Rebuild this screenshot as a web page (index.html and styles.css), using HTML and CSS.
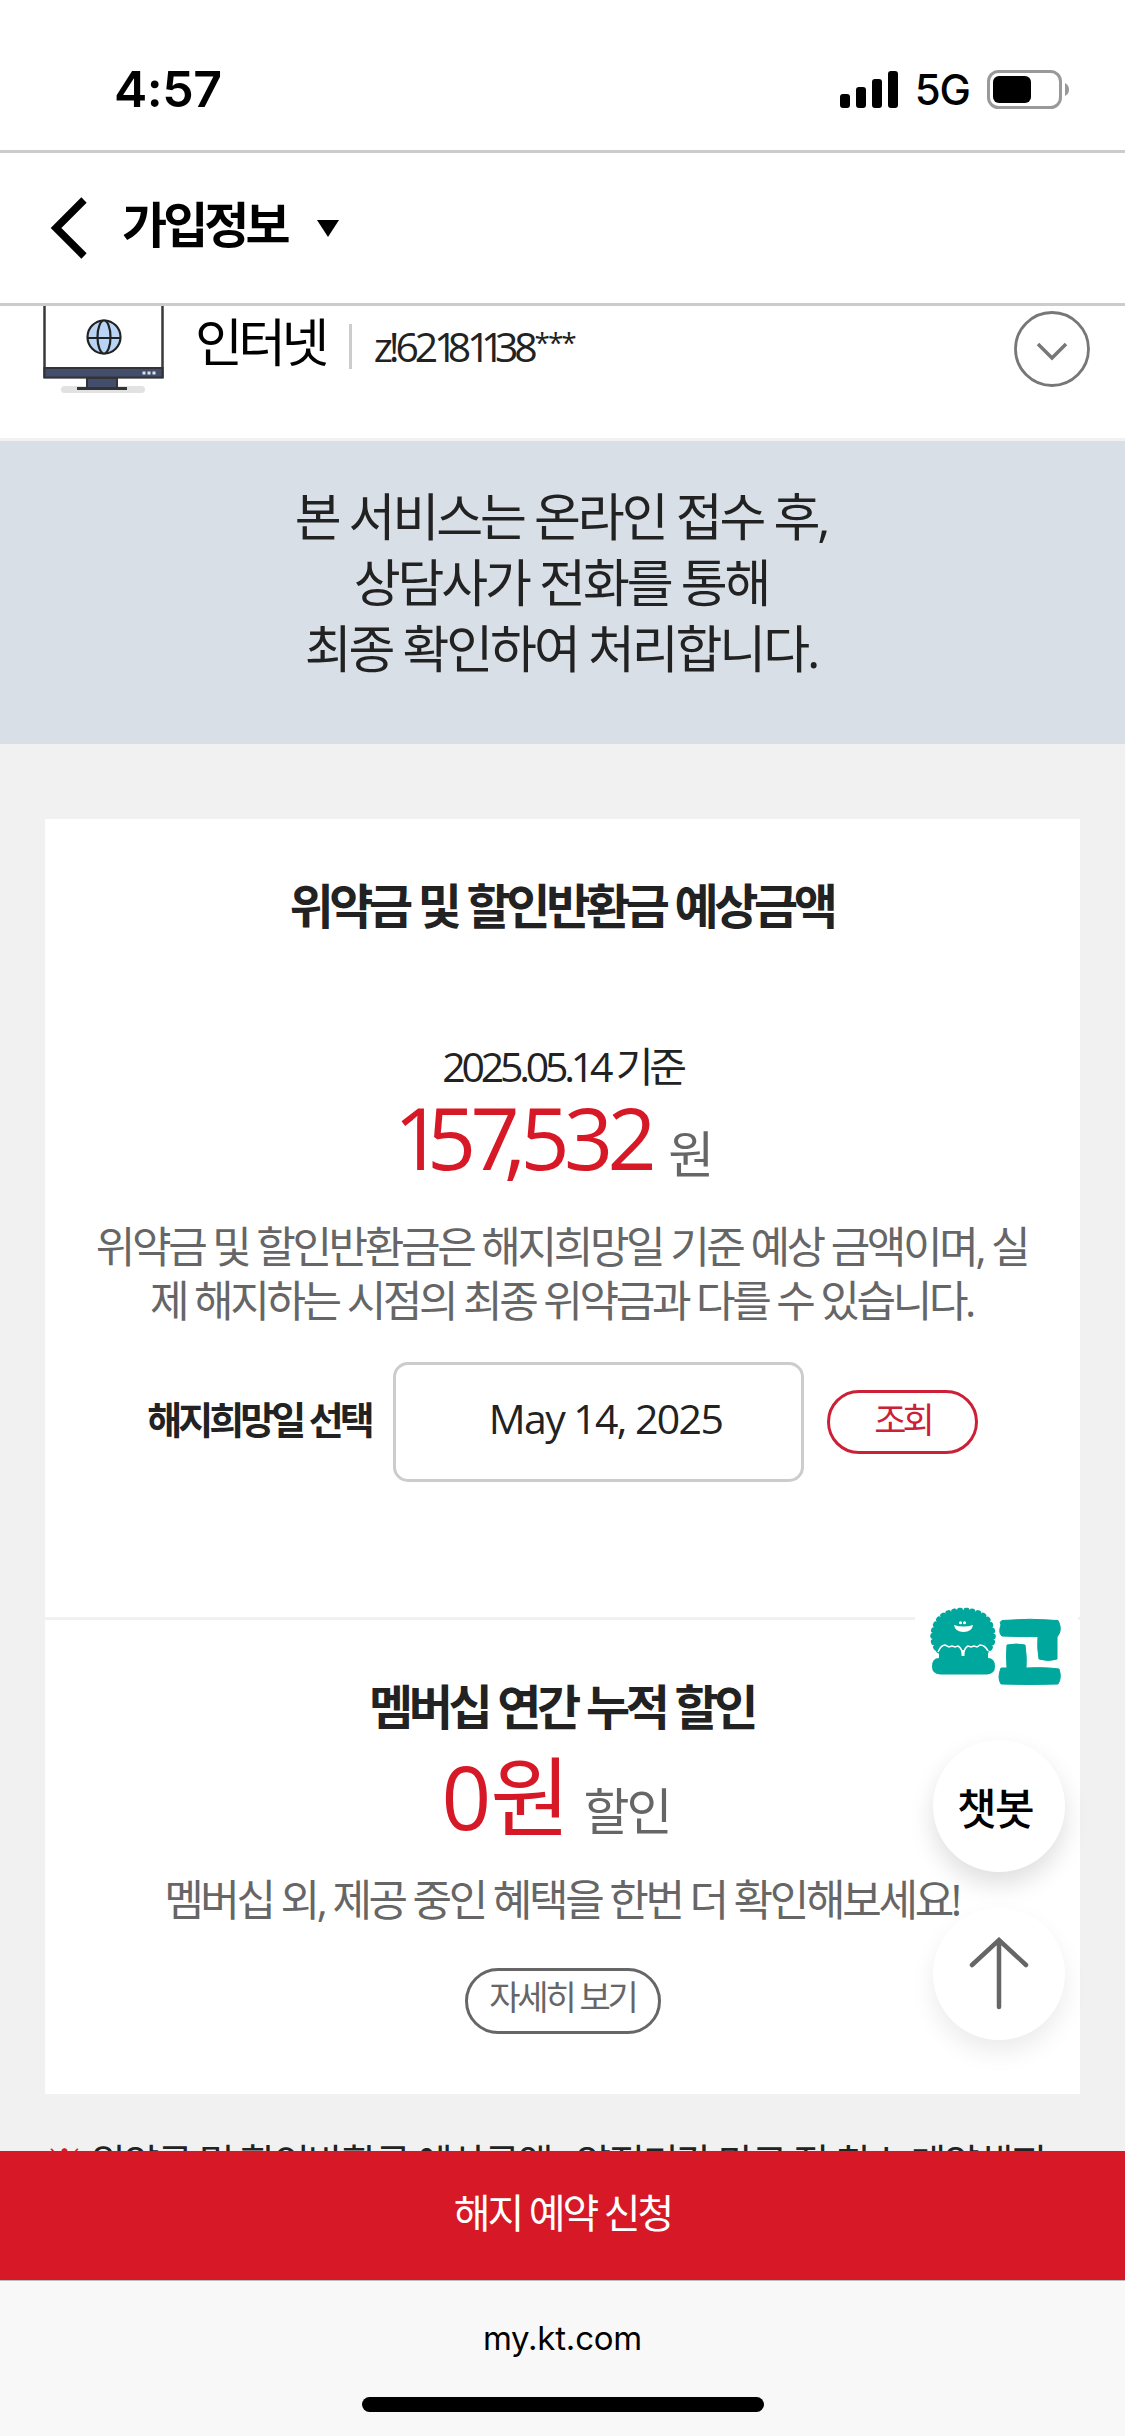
FILE: index.html
```html
<!DOCTYPE html>
<html lang="ko">
<head>
<meta charset="utf-8">
<title>가입정보</title>
<link rel="stylesheet" href="styles.css">
</head>
<body>
<div class="phone">
  <div class="status">
    <span class="time">4:57</span>
    <div class="signals">
      <svg class="bars" width="58" height="37" viewBox="0 0 58 37"><rect x="0" y="23" width="10" height="14" rx="3"/><rect x="16" y="16" width="10" height="21" rx="3"/><rect x="32" y="8" width="10" height="29" rx="3"/><rect x="48" y="0" width="10" height="37" rx="3"/></svg>
      <span class="net">5G</span>
      <svg class="battery" width="83" height="39" viewBox="0 0 83 39"><rect x="1.5" y="1.5" width="72" height="36" rx="10" fill="none" stroke="#999" stroke-width="3"/><rect x="6" y="6" width="38" height="27" rx="6"/><path d="M78 13q4 2 4 6.500t-4 6.500z" fill="#999"/></svg>
    </div>
  </div>

  <header class="nav">
    <svg class="back" width="38" height="62" viewBox="0 0 38 62"><path d="M34 3L6 31l28 28" fill="none" stroke="#000" stroke-width="7.500"/></svg>
    <h1 class="nav-title">가입정보</h1>
    <svg class="caret" width="22" height="17" viewBox="0 0 22 17"><path d="M0 0h22L11 17z"/></svg>
  </header>

  <section class="product">
    <svg class="monitor" width="122" height="88" viewBox="0 0 122 88">
      <rect x="18" y="80" width="84" height="7" rx="3.500" fill="#e2e2e2"/>
      <path d="M1.500 0v71h118V0" fill="#fff" stroke="#3a3a3c" stroke-width="2.500"/>
      <rect x="1.500" y="62" width="118" height="9.500" fill="#434e6c" stroke="#333336" stroke-width="2"/>
      <rect x="44" y="72" width="30" height="10" fill="#434e6c" stroke="#333336" stroke-width="2"/>
      <path d="M34 82.500h50" stroke="#333336" stroke-width="3"/>
      <path d="M99.500 67h3m2 0h3m2 0h3" stroke="#dde1ea" stroke-width="3"/>
      <g fill="#b9d5f6" stroke="#222" stroke-width="2.200"><circle cx="61" cy="31" r="16.500"/><ellipse cx="61" cy="31" rx="6.500" ry="16.500"/><path d="M44.500 32h33"/></g>
    </svg>
    <span class="product-name">인터넷</span>
    <span class="bar"></span>
    <span class="product-id">z!62<span class="kern">1</span>8<span class="kern">11</span>38<span class="masked">***</span></span>
    <svg class="toggle" width="76" height="76" viewBox="0 0 76 76" fill="none" stroke="#777"><circle cx="38" cy="38" r="36.500" stroke-width="2.800"/><path d="M24 33l14 14 14-14" stroke-width="3.500"/></svg>
  </section>

  <p class="notice">본 서비스는 온라인 접수 후,<br>상담사가 전화를 통해<br>최종 확인하여 처리합니다.</p>

  <main class="page">
    <article class="card">
      <section class="fee">
        <h2 class="card-title">위약금 및 할인반환금 예상금액</h2>
        <p class="date">2025.05.14 기준</p>
        <p class="amount"><strong class="value"><span class="tight">1</span>5<span class="tight">7</span>,532</strong><span class="unit">원</span></p>
        <p class="desc">위약금 및 할인반환금은 해지희망일 기준 예상 금액이며, 실<br>제 해지하는 시점의 최종 위약금과 다를 수 있습니다.</p>
        <div class="picker">
          <span class="picker-label">해지희망일 선택</span>
          <span class="picker-input">May 14, 2025</span>
          <span class="search">조회</span>
        </div>
      </section>
      <section class="member">
        <h2 class="card-title member-title">멤버십 연간 누적 할인</h2>
        <p class="discount"><strong class="value zero">0<span class="won">원</span></strong><span class="unit off">할인</span></p>
        <p class="desc member-desc">멤버십 외, 제공 중인 혜택을 한번 더 확인해보세요!</p>
        <span class="more">자세히 보기</span>
      </section>
    </article>
    <p class="note"><span class="mark">※</span> 위약금 및 할인반환금 예상금액 : 약정기간 만료 전 취소 계약해지</p>
  </main>

  <div class="cta">해지 예약 신청</div>
  <footer class="browser"><span class="url">my.kt.com</span><span class="home"></span></footer>

  <aside class="float">
    <svg class="yogo" width="163" height="92" viewBox="0 0 163 92">
      <g fill="#00a79d" stroke="#00a79d">
        <path d="M21 50Q15 40 20 28Q25 13 48 12Q72 13 76 28Q81 40 75 50Q70 58 48 56Q26 58 21 50z" stroke-width="5" stroke-dasharray="1 5" stroke-linecap="round"/>
        <path d="M24 50V60Q17 60 17 68.500Q17 76 25 76.500H72Q80 76 80 68.500Q80 60 73 60V48z" stroke="none"/>
        <path d="M86 27Q84 24 87 22.500Q115 20 143 22.500Q147 30 144 36L142 39V61Q134 64 124 61Q122 50 123 38.500Q105 39 87 38Q83 35 86 27z" stroke-width="1"/>
        <path d="M92 70H86Q82 80 86 86Q115 87 143 86Q147 80 144 71Q130 69 111 70Q112 60 110 47Q102 45 92 47Q91 57 92 70z" stroke-width="1"/>
      </g>
      <path d="M39 27q9.500 3 19 0q-1 7-9.500 7t-9.500-7z" fill="#fff"/><circle cx="45.500" cy="24.700" r="1.500" fill="#fff"/><circle cx="49.500" cy="24.700" r="1.500" fill="#fff"/>
      <path d="M23 54q3-7 7-7l4 2 3-1 3 1 3-1q4 2 5 10q1-8 5-10l3 1 3-1 3 1 3-2q5 0 8 6" fill="none" stroke="#fff" stroke-width="1.500"/>
      <path d="M46.500 52v6h3v-6z" fill="#fff"/>
    </svg>
    <span class="round chat">챗봇</span>
    <span class="round top"><svg width="60" height="74" viewBox="0 0 60 74" fill="none" stroke="#666" stroke-width="4.500" stroke-linecap="round"><path d="M30 3v67M3 28L30 3l27 25"/></svg></span>
  </aside>
</div>
</body>
</html>
```
FILE: styles.css
```css
* { box-sizing: border-box; }
body, h1, h2, p { margin: 0; }
body { background: #fff; font-family: "Open Sans", "Noto Sans CJK KR", sans-serif; color: #222; }
.phone { position: relative; width: 1125px; height: 2436px; overflow: hidden; display: flex; flex-direction: column; background: #fff; white-space: nowrap; }

.status { height: 153px; flex: none; border-bottom: 3px solid #ccc; display: flex; justify-content: space-between; align-items: flex-start; padding: 59px 55px 0 114px; color: #000; font-family: Inter, sans-serif; }
.time { font-size: 50px; font-weight: 600; line-height: 60px; letter-spacing: -0.5px; }
.signals { display: flex; align-items: center; height: 60px; }
.net { font-size: 42px; font-weight: 500; margin: 2px 17px 0; letter-spacing: -1px; line-height: 54px; }

.nav { height: 153px; flex: none; border-bottom: 3px solid #ccc; display: flex; align-items: center; padding-left: 50px; color: #000; }
.nav-title { font-size: 49px; line-height: 70px; font-weight: 600; letter-spacing: -3.900px; margin: -12px 0 0 34px; font-family: "Noto Sans CJK KR", sans-serif; }
.caret { margin-left: 30px; }

.product { height: 135px; flex: none; border-bottom: 3px solid #f1f1f1; display: flex; align-items: flex-start; padding: 0 35px 0 43px; }
.product-name { font-size: 52px; line-height: 72px; letter-spacing: -4.600px; margin: 0 0 0 30px; color: #000; }
.bar { width: 3px; height: 45px; background: #ccc; margin: 18px 0 0 24px; }
.product-id { font-size: 41px; line-height: 60px; letter-spacing: -4.200px; margin: 10px 0 0 22px; }
.kern { letter-spacing: -9.500px; }
.masked { font-size: 28px; font-weight: 500; line-height: 1; letter-spacing: -2px; margin-left: 1px; vertical-align: 9px; }
.toggle { margin: 5px 0 0 auto; }

.notice { height: 303px; flex: none; background: #d8dfe7; padding: 42px 3px 0 0; text-align: center; font-size: 51px; line-height: 66px; letter-spacing: -3.100px; }

.page { height: 1407px; flex: none; overflow: hidden; background: #f1f1f1; padding: 75px 45px 0; }
.card { background: #fff; height: 1275px; }
.fee { height: 801px; border-bottom: 3px solid #f1f1f1; padding-top: 49px; text-align: center; }
.card-title { font-size: 48px; line-height: 70px; font-weight: 700; letter-spacing: -4.400px; padding-right: 2px; font-family: "Noto Sans CJK KR", sans-serif; }
.date { font-size: 41px; line-height: 60px; letter-spacing: -4.200px; margin-top: 98px; }
.amount, .discount { display: flex; justify-content: center; align-items: baseline; height: 90px; line-height: 80px; }
.amount { padding: 1px 20px 0 0; }
.value { font-size: 86px; font-weight: 400; letter-spacing: -5.600px; color: #d71826; }
.tight { letter-spacing: -16px; }
.unit { font-size: 50px; color: #666; letter-spacing: -3px; margin-left: 17px; position: relative; top: 3px; }
.desc { font-size: 43px; line-height: 54px; letter-spacing: -3.350px; color: #666; margin-top: 34px; padding-right: 2px; }
.picker { display: flex; justify-content: flex-start; align-items: center; margin-top: 34px; padding-left: 102px; }
.picker-label { font-size: 38px; font-weight: 700; letter-spacing: -4px; width: 224px; margin-top: -9px; font-family: "Noto Sans CJK KR", sans-serif; }
.picker-input { width: 411px; height: 120px; line-height: 107px; margin-left: 22px; border: 3px solid #ccc; border-radius: 15px; padding-left: 14px; font-size: 41px; letter-spacing: -1.600px; }
.search { width: 151px; height: 64px; line-height: 54px; margin-left: 23px; border: 3px solid #cb2035; border-radius: 32px; color: #cb2035; font-size: 35px; letter-spacing: -4px; }

.member { padding-top: 49px; display: flex; flex-direction: column; align-items: center; }
.discount { margin-top: 17px; padding-right: 14px; }
.zero { font-size: 87px; letter-spacing: -1px; }
.off { margin-left: 14px; top: 0; }
.member-desc { margin-top: 27px; }
.more { width: 196px; height: 66px; line-height: 53px; margin-top: 41px; border: 3px solid #666; border-radius: 33px; text-align: center; color: #666; font-size: 34px; letter-spacing: -3.100px; }
.note { font-size: 39px; line-height: 60px; letter-spacing: -2.200px; margin-top: 38px; }
.mark { color: #d71826; }

.cta { height: 129px; flex: none; background: #d71826; color: #fff; text-align: center; font-size: 40px; line-height: 124px; letter-spacing: -3px; }
.browser { flex: 1; border-top: 1px solid #bbb; background: #f8f8f8; display: flex; flex-direction: column; align-items: center; color: #000; }
.url { font-family: Inter, sans-serif; font-size: 33px; line-height: 50px; letter-spacing: -0.200px; margin-top: 32px; }
.home { width: 402px; height: 15px; border-radius: 8px; background: #000; margin-top: 34px; }

.float { position: absolute; left: 915px; top: 1598px; width: 165px; display: flex; flex-direction: column; align-items: center; }
.yogo { background: #fff; align-self: flex-start; }
.round { width: 132px; height: 132px; border-radius: 50%; background: #fff; box-shadow: 0 12px 24px rgba(0,0,0,.13); display: flex; align-items: center; justify-content: center; margin-left: 3px; }
.chat { margin-top: 50px; padding-right: 8px; color: #000; font-size: 43px; font-weight: 500; letter-spacing: -1.500px; font-family: "Noto Sans CJK KR", sans-serif; }
.top { margin-top: 36px; box-shadow: 0 12px 24px rgba(0,0,0,.08); }
```
